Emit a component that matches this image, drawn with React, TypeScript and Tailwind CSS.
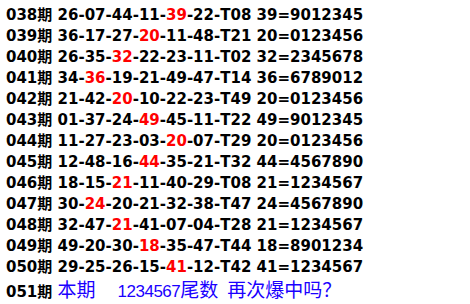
import React from "react";

type Row = { no: string; nums: string[]; red: number; t: string; hit: string; tail: string };

const rows: Row[] = [
  { no: "038", nums: ["26", "07", "44", "11", "39", "22"], red: 4, t: "T08", hit: "39", tail: "9012345" },
  { no: "039", nums: ["36", "17", "27", "20", "11", "48"], red: 3, t: "T21", hit: "20", tail: "0123456" },
  { no: "040", nums: ["26", "35", "32", "22", "23", "11"], red: 2, t: "T02", hit: "32", tail: "2345678" },
  { no: "041", nums: ["34", "36", "19", "21", "49", "47"], red: 1, t: "T14", hit: "36", tail: "6789012" },
  { no: "042", nums: ["21", "42", "20", "10", "22", "23"], red: 2, t: "T49", hit: "20", tail: "0123456" },
  { no: "043", nums: ["01", "37", "24", "49", "45", "11"], red: 3, t: "T22", hit: "49", tail: "9012345" },
  { no: "044", nums: ["11", "27", "23", "03", "20", "07"], red: 4, t: "T29", hit: "20", tail: "0123456" },
  { no: "045", nums: ["12", "48", "16", "44", "35", "21"], red: 3, t: "T32", hit: "44", tail: "4567890" },
  { no: "046", nums: ["18", "15", "21", "11", "40", "29"], red: 2, t: "T08", hit: "21", tail: "1234567" },
  { no: "047", nums: ["30", "24", "20", "21", "32", "38"], red: 1, t: "T47", hit: "24", tail: "4567890" },
  { no: "048", nums: ["32", "47", "21", "41", "07", "04"], red: 2, t: "T28", hit: "21", tail: "1234567" },
  { no: "049", nums: ["49", "20", "30", "18", "35", "47"], red: 3, t: "T44", hit: "18", tail: "8901234" },
  { no: "050", nums: ["29", "25", "26", "15", "41", "12"], red: 4, t: "T42", hit: "41", tail: "1234567" },
];

export default function App() {
  return (
    <div className="w-[470px] h-[304px] bg-white pt-[5px] pl-[6px] overflow-hidden font-['DejaVu_Sans','Noto_Sans_CJK_SC',sans-serif] text-[15px] leading-[21px] font-bold text-black">
      {rows.map((r) => (
        <div key={r.no} className="whitespace-nowrap">
          {r.no}期{" "}
          {r.nums.map((n, i) => (
            <React.Fragment key={i}>
              {i === r.red ? <span className="text-[#ff0000]">{n}</span> : n}-
            </React.Fragment>
          ))}
          {r.t} {r.hit}={r.tail}
        </div>
      ))}

      {/* current period */}
      <div className="whitespace-nowrap">
        051期{" "}
        <span className="font-normal text-[19px] text-[#1a00ff] font-['Noto_Sans_CJK_SC',sans-serif]">
          本期　<span className="ml-[3px] text-[17px] tracking-[-0.5px] font-['Liberation_Sans',sans-serif]">1234567</span>尾数<span className="ml-[9px]">再次爆中吗？</span>
        </span>
      </div>
    </div>
  );
}
